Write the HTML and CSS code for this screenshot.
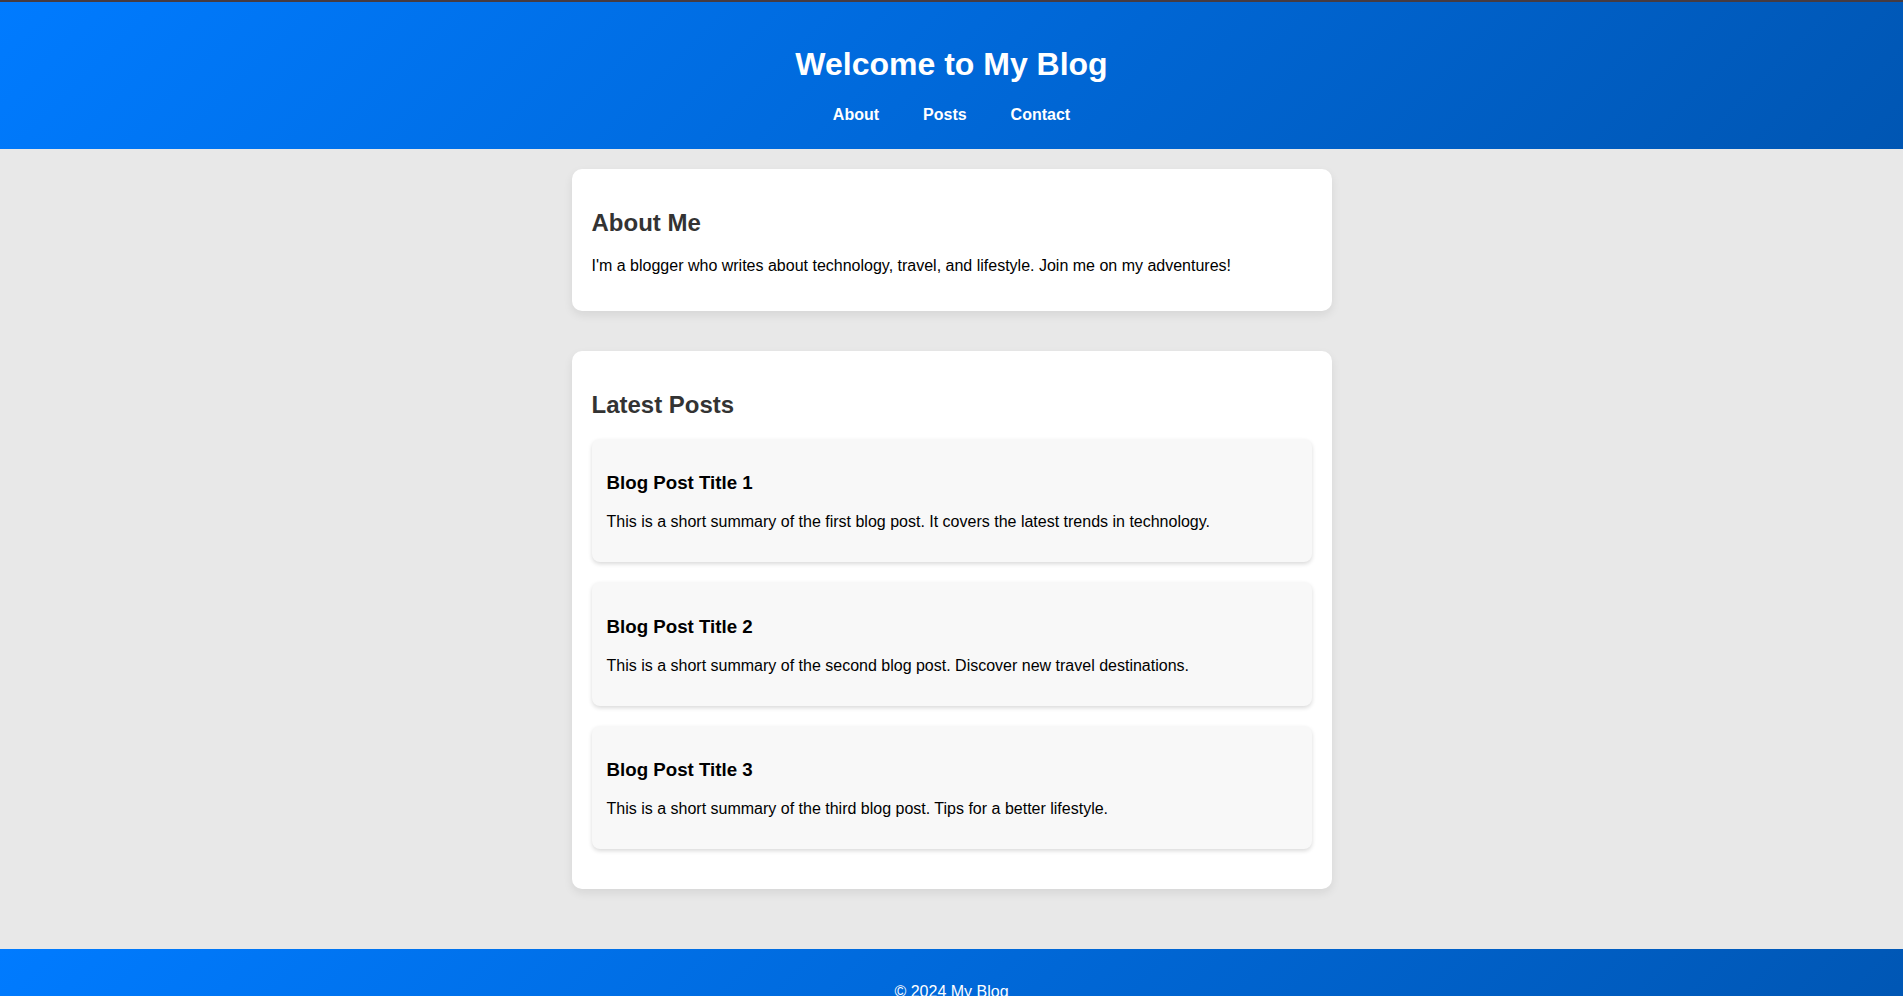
FILE: index.html
```html
<!DOCTYPE html>
<html lang="en">
<head>
<meta charset="utf-8">
<title>My Blog</title>
<link rel="stylesheet" href="styles.css">
</head>
<body>
<header class="site-header">
  <h1 class="site-title">Welcome to My Blog</h1>
  <nav class="site-nav">
    <a href="#about">About</a>
    <a href="#posts">Posts</a>
    <a href="#contact">Contact</a>
  </nav>
</header>
<main class="content">
  <section class="card" id="about">
    <h2 class="card-title">About Me</h2>
    <p>I'm a blogger who writes about technology, travel, and lifestyle. Join me on my adventures!</p>
  </section>
  <section class="card" id="posts">
    <h2 class="card-title">Latest Posts</h2>
    <article class="post">
      <h3 class="post-title">Blog Post Title 1</h3>
      <p>This is a short summary of the first blog post. It covers the latest trends in technology.</p>
    </article>
    <article class="post">
      <h3 class="post-title">Blog Post Title 2</h3>
      <p>This is a short summary of the second blog post. Discover new travel destinations.</p>
    </article>
    <article class="post">
      <h3 class="post-title">Blog Post Title 3</h3>
      <p>This is a short summary of the third blog post. Tips for a better lifestyle.</p>
    </article>
  </section>
</main>
<footer class="site-footer" id="contact">
  <p>&copy; 2024 My Blog</p>
</footer>
</body>
</html>
```

FILE: styles.css
```css
html, body {
  margin: 0;
  padding: 0;
}

body {
  font-family: "Liberation Sans", Arial, sans-serif;
  font-size: 16px;
  background: #e8e8e8;
  color: #000;
}

.site-header {
  border-top: 2px solid #463b41;
  background: linear-gradient(135deg, #007bff, #0056b3);
  color: #fff;
  text-align: center;
  padding: 44px 20px 25px;
}

.site-title {
  margin: 0;
  font-size: 32px;
  font-weight: bold;
}

.site-nav {
  margin-top: 23px;
  display: flex;
  justify-content: center;
  gap: 44px;
}

.site-nav a {
  color: #fff;
  font-weight: bold;
  text-decoration: none;
}

.content {
  max-width: 760px;
  margin: 0 auto;
  padding: 20px;
}

.card {
  background: #fff;
  border-radius: 10px;
  padding: 20px;
  margin-bottom: 40px;
  box-shadow: 0 4px 10px rgba(0, 0, 0, 0.08);
}

.card-title {
  color: #333;
  font-size: 24px;
  margin: 19.92px 0;
}

.card p {
  margin: 16px 0;
}

.post {
  background: #f8f8f8;
  border-radius: 8px;
  padding: 15px;
  margin-bottom: 20px;
  box-shadow: 0 2px 4px rgba(0, 0, 0, 0.15);
}

.post-title {
  font-size: 18.72px;
  margin: 18.72px 0;
}

.site-footer {
  background: linear-gradient(135deg, #007bff, #0056b3);
  color: #fff;
  text-align: center;
  padding: 18px 20px 20px;
}

.site-footer p {
  margin: 16px 0;
}
```
